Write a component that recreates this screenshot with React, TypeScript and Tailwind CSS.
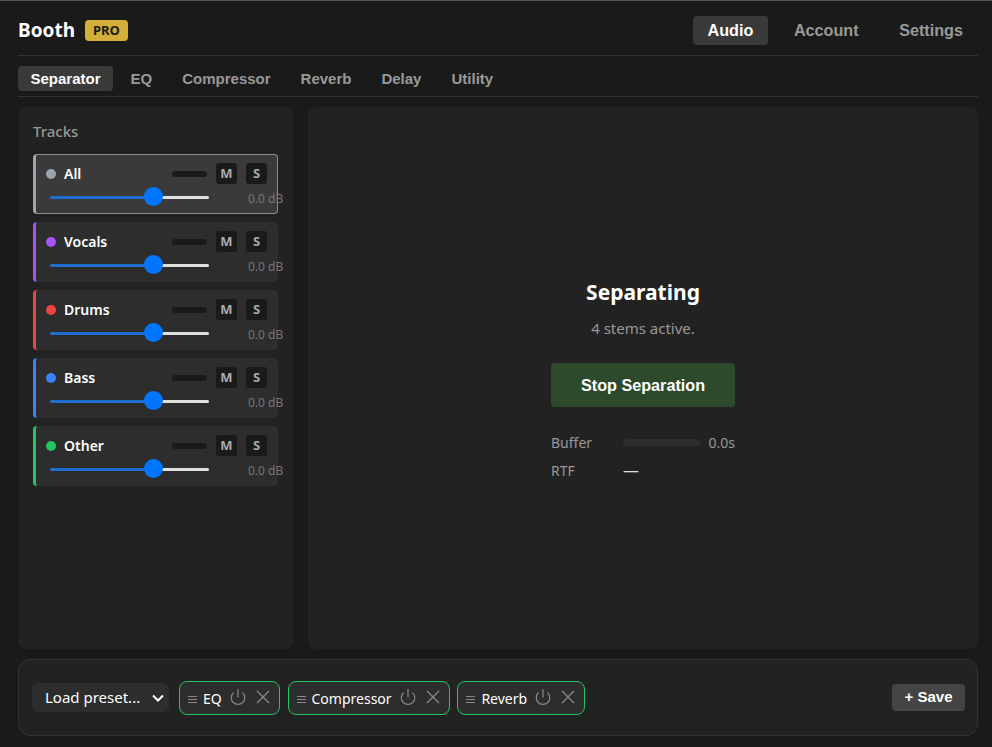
import { Power } from "lucide-react";

const sans = "font-['Noto_Sans','Open_Sans',sans-serif]";
const arial = "font-['Liberation_Sans',Arial,sans-serif]";

const tracks = [
  { name: "All", dot: "bg-[#9ca3af]", bar: "border-l-[#9ca3af]", active: true },
  { name: "Vocals", dot: "bg-[#a855f7]", bar: "border-l-[#a855f7]", active: false },
  { name: "Drums", dot: "bg-[#ef4444]", bar: "border-l-[#ef4444]", active: false },
  { name: "Bass", dot: "bg-[#3b82f6]", bar: "border-l-[#3b82f6]", active: false },
  { name: "Other", dot: "bg-[#22c55e]", bar: "border-l-[#22c55e]", active: false },
];

const tabs = ["Separator", "EQ", "Compressor", "Reverb", "Delay", "Utility"];

function TrackRow({ track }: { track: (typeof tracks)[number] }) {
  return (
    <div
      className={`h-[60px] w-[245px] shrink-0 rounded-[4px] border-l-[3px] pl-[10px] ${track.bar} ${
        track.active
          ? "border-y border-r border-y-[#8b8f96] border-r-[#8b8f96] bg-[#3a3a3a] pr-[10px] pt-[8px]"
          : "bg-[#2d2d2d] pr-[11px] pt-[9px]"
      }`}
    >
      <div className="flex h-[21px] items-center">
        <span className={`h-[10px] w-[10px] rounded-full ${track.dot}`} />
        <span className={`ml-[8px] text-[14px] font-semibold text-white ${sans}`}>{track.name}</span>
        <div className="ml-auto h-[6px] w-[35px] rounded-[3px] bg-[#1a1a1a]" />
        <button className={`ml-[9px] h-[21px] w-[21px] rounded-[3px] bg-[#1a1a1a] text-[13px] font-bold text-[#aaaaaa] ${sans}`}>M</button>
        <button className={`ml-[9px] h-[21px] w-[21px] rounded-[3px] bg-[#1a1a1a] text-[13px] font-bold text-[#aaaaaa] ${sans}`}>S</button>
      </div>
      <div className="relative mt-[3px] flex h-[20px] items-center pl-[4px]">
        <div className="h-[3px] w-[103px] rounded-l-full bg-[#1f6fd1]" />
        <div className="h-[3px] w-[56px] rounded-r-full bg-[#e0e0e0]" />
        <div className="absolute left-[98px] top-0 h-[19px] w-[19px] rounded-full bg-[#0075ff]" />
        <span className={`absolute left-[202px] top-[3px] whitespace-nowrap text-[12px] text-[#777777] ${sans}`}>0.0 dB</span>
      </div>
    </div>
  );
}

function Chip({ label }: { label: string }) {
  return (
    <div className="flex h-[34px] items-center rounded-[8px] border border-[#22c55e] bg-[#2d2d2d] pl-[8px] pr-[9px]">
      <span className="mt-[3px] flex w-[9px] flex-col gap-[2px]">
        <span className="h-px bg-[#888888]" />
        <span className="h-px bg-[#888888]" />
        <span className="h-px bg-[#888888]" />
      </span>
      <span className={`ml-[6px] mt-px text-[14px] text-white ${sans}`}>{label}</span>
      <Power className="ml-[7px] mb-[2px] h-[18px] w-[18px] text-[#888888]" strokeWidth={1.6} />
      <svg className="ml-[9px] mb-[2px] h-[14px] w-[14px] text-[#888888]" viewBox="0 0 14 14" fill="none" stroke="currentColor" strokeWidth={1.3}>
        <path d="M1 1 13 13M13 1 1 13" />
      </svg>
    </div>
  );
}

export default function App() {
  return (
    <div className="flex h-[747px] w-[992px] flex-col overflow-hidden border-t border-t-[#555555] bg-[#1a1a1a] pl-[18px] pr-[14px]">
      <header className="flex h-[55px] shrink-0 items-center border-b border-b-[#333333] pt-[5px]">
        <span className={`text-[19px] font-bold text-white ${sans}`}>Booth</span>
        <span className={`ml-[10px] flex h-[21px] items-center rounded-[4px] bg-[#d4af37] px-[8px] text-[13px] font-bold text-[#1a1a1a] ${sans}`}>PRO</span>
        <nav className={`ml-auto flex items-center gap-[11px] text-[16.2px] font-bold text-[#999999] ${arial}`}>
          <button className="h-[29px] rounded-[4px] bg-[#3a3a3a] px-[15px] text-white">Audio</button>
          <button className="h-[29px] px-[14.5px]">Account</button>
          <button className="h-[29px] px-[15px]">Settings</button>
        </nav>
      </header>

      <div className={`flex h-[41px] shrink-0 items-start gap-[5px] border-b border-b-[#333333] pt-[10px] text-[15px] font-bold text-[#999999] ${arial}`}>
        {tabs.map((t, i) => (
          <button
            key={t}
            className={`h-[25px] rounded-[4px] px-[12.5px] pt-px ${i === 0 ? "bg-[#3a3a3a] text-white" : ""}`}
          >
            {t}
          </button>
        ))}
      </div>

      <main className="mt-[10px] flex h-[542px] shrink-0 gap-[15px]">
        <aside className="flex w-[275px] shrink-0 flex-col rounded-[8px] bg-[#222222] px-[15px] pt-[14px]">
          <h2 className={`h-[33px] text-[15px] font-medium leading-[20px] text-[#999999] ${sans}`}>Tracks</h2>
          <div className="flex flex-col gap-[8px]">
            {tracks.map((t) => (
              <TrackRow key={t.name} track={t} />
            ))}
          </div>
        </aside>

        <section className="flex flex-1 flex-col items-center rounded-[8px] bg-[#222222] pt-[169px]">
          <h1 className={`text-[21px] font-bold leading-[32px] text-white ${sans}`}>Separating</h1>
          <p className={`mt-[10px] text-[15px] leading-[20px] text-[#999999] ${sans}`}>4 stems active.</p>
          <button className={`mt-[25px] h-[44px] w-[184px] rounded-[4px] bg-[#2d4a2d] text-[16.2px] font-bold text-white ${arial}`}>Stop Separation</button>
          <div className={`mt-[21px] w-[184px] text-[14px] text-[#999999] ${sans}`}>
            <div className="flex h-[28px] items-center">
              <span className="w-[72px]">Buffer</span>
              <div className="h-[7px] w-[77px] rounded-full bg-[#2d2d2d]" />
              <span className="ml-auto">0.0s</span>
            </div>
            <div className="flex h-[28px] items-center">
              <span className="w-[72px]">RTF</span>
              <span className="text-[16px] text-[#e0e0e0]">—</span>
            </div>
          </div>
        </section>
      </main>

      <footer className="mt-[10px] flex h-[77px] shrink-0 items-center rounded-[12px] border border-[#333333] bg-[#222222] pl-[13px] pr-[12px]">
        <div className="relative h-[29px] w-[137px]">
          <select className={`h-full w-full appearance-none rounded-[6px] bg-[#2d2d2d] pl-[13px] text-[15px] text-white ${sans}`}>
            <option>Load preset...</option>
          </select>
          <svg className="pointer-events-none absolute left-[120px] top-[11px] h-[8px] w-[12px] text-white" viewBox="0 0 12 8" fill="none" stroke="currentColor" strokeWidth={2}>
            <path d="M1 1.5 6 6.5 11 1.5" />
          </svg>
        </div>
        <div className="ml-[10px] flex gap-[7.8px]">
          {["EQ", "Compressor", "Reverb"].map((c) => (
            <Chip key={c} label={c} />
          ))}
        </div>
        <button className={`ml-auto h-[27px] rounded-[4px] bg-[#444444] px-[12.5px] text-[15px] font-bold text-white ${arial}`}>+ Save</button>
      </footer>
    </div>
  );
}
